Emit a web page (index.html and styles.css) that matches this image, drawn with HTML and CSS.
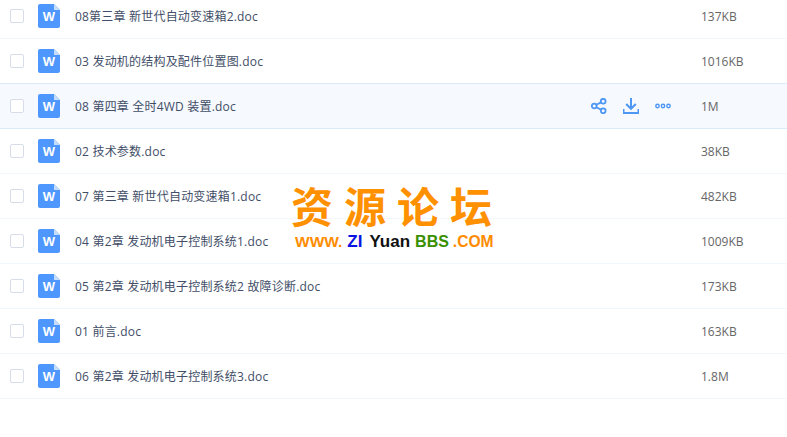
FILE: index.html
```html
<!DOCTYPE html>
<html lang="zh-CN">
<head>
<meta charset="utf-8">
<title>文件列表</title>
<link rel="stylesheet" href="styles.css">
</head>
<body>
<svg class="defs" width="0" height="0" aria-hidden="true">
  <symbol id="word" viewBox="0 0 22 24">
    <path d="M2 0H16L22 6V22a2 2 0 0 1-2 2H2a2 2 0 0 1-2-2V2a2 2 0 0 1 2-2Z" fill="#4e97ff"/>
    <path d="M16 0L22 6H16Z" fill="#c5dcfb"/>
  </symbol>
</svg>
<main class="list">
  <div class="row"><span class="check"></span><span class="icon"><svg><use href="#word"/></svg><b>W</b></span><span class="name">08第三章 新世代自动变速箱2.doc</span><span class="size">137KB</span></div>
  <div class="row"><span class="check"></span><span class="icon"><svg><use href="#word"/></svg><b>W</b></span><span class="name">03 发动机的结构及配件位置图.doc</span><span class="size">1016KB</span></div>
  <div class="row active"><span class="check"></span><span class="icon"><svg><use href="#word"/></svg><b>W</b></span><span class="name">08 第四章 全时4WD 装置.doc</span>
    <span class="actions">
      <svg viewBox="0 0 16 16" width="16" height="16" fill="none" stroke="#4e97f5" stroke-width="1.8"><circle cx="3.2" cy="8" r="2.4"/><circle cx="12.200" cy="3.200" r="2.400"/><circle cx="12.200" cy="12.800" r="2.400"/><path d="M5.400 6.800L10 4.400M5.400 9.200L10 11.600"/></svg>
      <svg viewBox="0 0 16 16" width="16" height="16" fill="none" stroke="#4e97f5" stroke-width="2"><path d="M8 0V10.500M3.200 6L8 10.800L12.800 6M0.500 11V15H15.500V11"/></svg>
      <svg viewBox="0 0 16 16" width="16" height="16" fill="none" stroke="#4e97f5" stroke-width="1.400"><circle cx="2.500" cy="8" r="1.700"/><circle cx="8" cy="8" r="1.700"/><circle cx="13.500" cy="8" r="1.700"/></svg>
    </span>
    <span class="size">1M</span></div>
  <div class="row"><span class="check"></span><span class="icon"><svg><use href="#word"/></svg><b>W</b></span><span class="name">02 技术参数.doc</span><span class="size">38KB</span></div>
  <div class="row"><span class="check"></span><span class="icon"><svg><use href="#word"/></svg><b>W</b></span><span class="name">07 第三章 新世代自动变速箱1.doc</span><span class="size">482KB</span></div>
  <div class="row"><span class="check"></span><span class="icon"><svg><use href="#word"/></svg><b>W</b></span><span class="name">04 第2章 发动机电子控制系统1.doc</span><span class="size">1009KB</span></div>
  <div class="row"><span class="check"></span><span class="icon"><svg><use href="#word"/></svg><b>W</b></span><span class="name">05 第2章 发动机电子控制系统2 故障诊断.doc</span><span class="size">173KB</span></div>
  <div class="row"><span class="check"></span><span class="icon"><svg><use href="#word"/></svg><b>W</b></span><span class="name">01 前言.doc</span><span class="size">163KB</span></div>
  <div class="row"><span class="check"></span><span class="icon"><svg><use href="#word"/></svg><b>W</b></span><span class="name">06 第2章 发动机电子控制系统3.doc</span><span class="size">1.8M</span></div>
</main>
<div class="mark">
  <div class="mark-cn">资源论坛</div>
  <div class="mark-en"><span class="o">WWW.</span><span class="bl">ZI</span><span class="k">Yuan</span><span class="g">BBS</span><span class="o wide">.COM</span></div>
</div>
</body>
</html>
```
FILE: styles.css
```css
* { box-sizing: border-box; }
html, body { margin: 0; height: 100%; overflow: hidden; background: #fff; }
body { font-family: "Open Sans", "Noto Sans CJK SC", sans-serif; font-size: 12px; color: #424e67; }
.defs { position: absolute; }
.list { margin-top: -6px; }
.row { display: flex; align-items: center; height: 45px; padding-left: 10px; border-bottom: 1px solid #f2f6fd; }
.row.active { background: #f6f9fe; border-bottom-color: #dcebfb; box-shadow: 0 -1px 0 #dcebfb; }
.check { width: 14px; height: 14px; border: 1px solid #d7dde8; border-radius: 2px; background: #fff; flex: none; }
.icon { position: relative; width: 22px; height: 24px; margin-left: 14px; flex: none; display: flex; align-items: center; justify-content: center; }
.icon svg { position: absolute; inset: 0; width: 22px; height: 24px; }
.icon b { position: relative; color: #fff; font: 700 13px "Liberation Sans", sans-serif; margin-top: 1px; }
.name { margin-left: 15px; flex: 1; white-space: nowrap; letter-spacing: 0.2px; }
.actions { display: flex; gap: 16px; margin-right: 30px; align-items: center; }
.size { width: 86px; flex: none; color: #666; }
.mark { position: absolute; left: 291px; top: 182px; width: 210px; }
.mark-cn { font: 700 42px/46px "Noto Sans CJK SC", sans-serif; letter-spacing: 11px; color: #ff9000; white-space: nowrap; }
.mark-en { display: flex; align-items: baseline; gap: 5px; margin-top: 5px; padding-left: 4px; font: 700 15.500px/17px "Liberation Sans", sans-serif; white-space: nowrap; }
.o { color: #ff8c00; }
.wide { font-size: 15.600px; margin-left: -1px; }
.bl { color: #0a14e0; font-size: 17px; margin-right: 2px; }
.k { color: #111; font-size: 17px; }
.g { color: #3a8f00; font-size: 16px; }
```
